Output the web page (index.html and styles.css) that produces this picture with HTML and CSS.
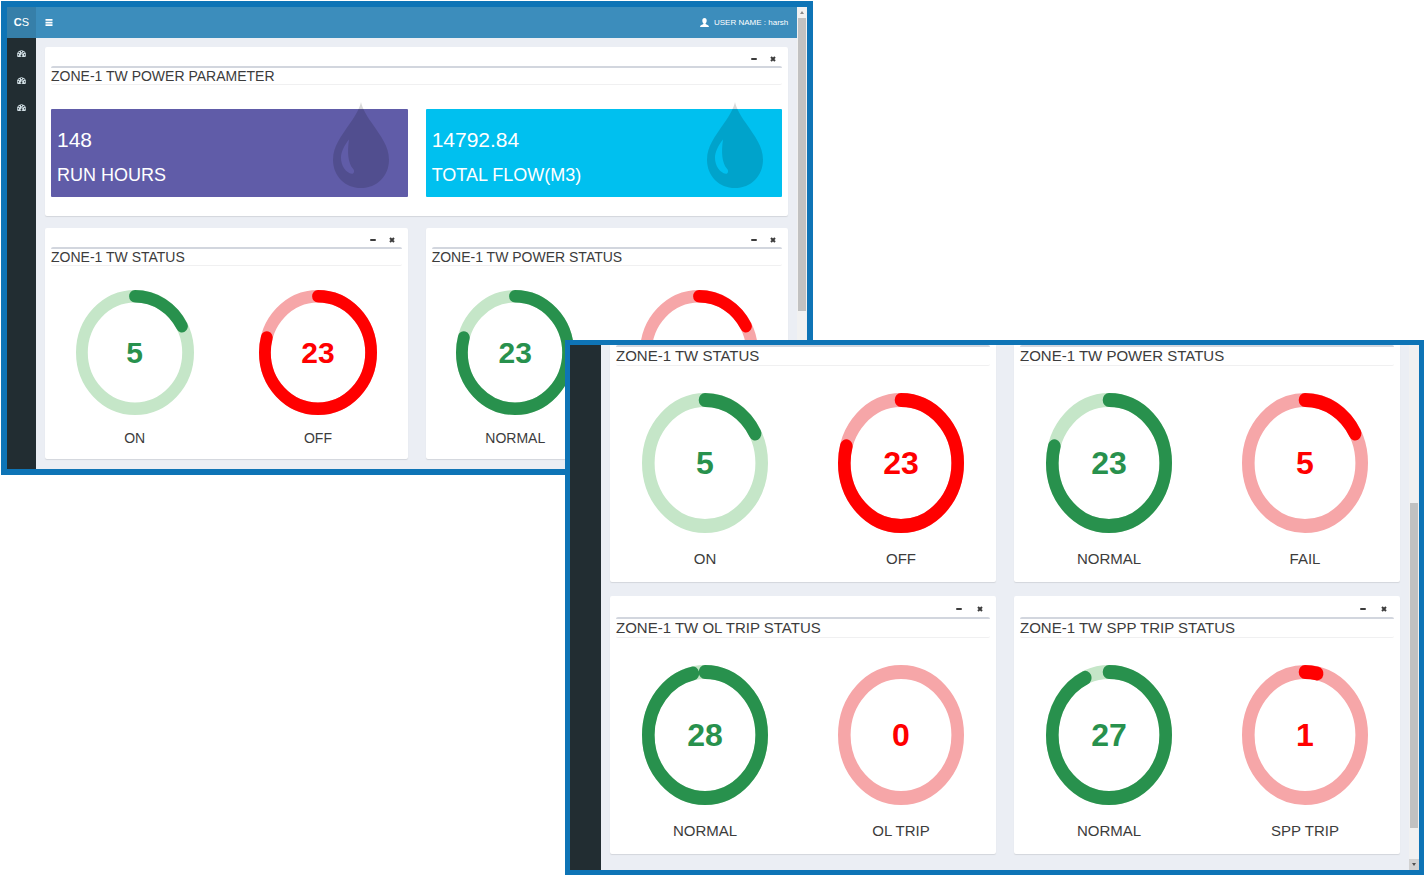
FILE: index.html
```
<!DOCTYPE html>
<html lang="en">
<head>
<meta charset="utf-8">
<title>Zone-1 TW dashboard</title>
<link rel="stylesheet" href="styles.css">
</head>
<body>
<svg class="symbols" aria-hidden="true">
  <symbol id="gauge" viewBox="0 0 1792 1600"><path d="M384 1152q0-53-37.5-90.5t-90.5-37.5-90.5 37.5-37.5 90.5 37.5 90.5 90.5 37.5 90.5-37.5 37.5-90.5zm192-448q0-53-37.5-90.5t-90.5-37.5-90.5 37.5-37.5 90.5 37.5 90.5 90.5 37.5 90.5-37.5 37.5-90.5zm428 481l101-382q6-26-7.5-48.5t-38.5-29.5-48 6.5-30 39.5l-101 382q-60 5-107 43.5t-63 98.5q-20 77 20 146t117 89 146-20 89-117q16-60-6-117t-72-91zm660-33q0-53-37.5-90.5t-90.5-37.5-90.5 37.5-37.5 90.5 37.5 90.5 90.5 37.5 90.5-37.5 37.5-90.5zm-640-640q0-53-37.5-90.5t-90.5-37.5-90.5 37.5-37.5 90.5 37.5 90.5 90.5 37.5 90.5-37.5 37.5-90.5zm448 192q0-53-37.5-90.5t-90.5-37.5-90.5 37.5-37.5 90.5 37.5 90.5 90.5 37.5 90.5-37.5 37.5-90.5zm320 448q0 261-141 483-19 29-54 29h-1402q-35 0-54-29-141-221-141-483 0-182 71-348t191-286 286-191 348-71 348 71 286 191 191 286 71 348z"/></symbol>
  <symbol id="drop" viewBox="0 0 56 85" preserveAspectRatio="none"><path fill-rule="evenodd" d="M28 0C29 5 33 13 39 21C48 34 56 44 56 57C56 73 44 85 28 85C12 85 0 73 0 57C0 44 8 34 17 21C23 13 27 5 28 0ZM16 37C11 43 8 50 8 55C8 63 13 70 19 71C21 71 22 68 20 66C15 60 14 50 16 37Z"/></symbol>
  <symbol id="minus" viewBox="0 0 6 6"><rect y="2" width="6" height="2" rx="1"/></symbol>
  <symbol id="cross" viewBox="0 0 6 6"><path d="M1 1L5 5M5 1L1 5" fill="none" stroke="currentColor" stroke-width="2"/></symbol>
</svg>

<main class="desktop">
  <section class="window window-main" aria-label="Dashboard, top">
    <header class="topbar">
      <a class="brand" href="#"><b>C</b>S</a>
      <button class="menu" aria-label="Toggle navigation"><svg viewBox="0 0 8 8"><path d="M0 1H8M0 4H8M0 7H8" stroke="currentColor" stroke-width="2" fill="none"/></svg></button>
      <a class="user" href="#"><svg viewBox="0 0 9 9"><path d="M4.500 0C6 0 6.700 1 6.700 2.400C6.700 3.800 6.200 4.800 5.600 5.300V6C6.500 6.600 9 7 9 9H0C0 7 2.500 6.600 3.400 6V5.300C2.800 4.800 2.300 3.800 2.300 2.400C2.300 1 3 0 4.500 0Z"/></svg>USER NAME : harsh</a>
    </header>
    <nav class="sidebar" aria-label="Main">
      <a href="#" aria-label="Dashboard 1"><svg><use href="#gauge"/></svg></a>
      <a href="#" aria-label="Dashboard 2"><svg><use href="#gauge"/></svg></a>
      <a href="#" aria-label="Dashboard 3"><svg><use href="#gauge"/></svg></a>
    </nav>
    <div class="content">
      <article class="card wide">
        <div class="tools"><button aria-label="Collapse"><svg><use href="#minus"/></svg></button><button aria-label="Close"><svg><use href="#cross"/></svg></button></div>
        <h2>ZONE-1 TW POWER PARAMETER</h2>
        <div class="tiles">
          <div class="tile purple"><p class="figure">148</p><p class="caption">RUN HOURS</p><svg><use href="#drop"/></svg></div>
          <div class="tile cyan"><p class="figure">14792.84</p><p class="caption">TOTAL FLOW(M3)</p><svg><use href="#drop"/></svg></div>
        </div>
      </article>
      <article class="card">
        <div class="tools"><button aria-label="Collapse"><svg><use href="#minus"/></svg></button><button aria-label="Close"><svg><use href="#cross"/></svg></button></div>
        <h2>ZONE-1 TW STATUS</h2>
        <div class="gauges">
          <figure class="gauge green"><svg viewBox="0 0 100 100" preserveAspectRatio="none"><circle class="track" cx="50" cy="50" r="45"/><circle class="value" cx="50" cy="50" r="45" pathLength="29" stroke-dasharray="5 29"/></svg><b>5</b><figcaption>ON</figcaption></figure>
          <figure class="gauge red"><svg viewBox="0 0 100 100" preserveAspectRatio="none"><circle class="track" cx="50" cy="50" r="45"/><circle class="value" cx="50" cy="50" r="45" pathLength="29" stroke-dasharray="23 29"/></svg><b>23</b><figcaption>OFF</figcaption></figure>
        </div>
      </article>
      <article class="card">
        <div class="tools"><button aria-label="Collapse"><svg><use href="#minus"/></svg></button><button aria-label="Close"><svg><use href="#cross"/></svg></button></div>
        <h2>ZONE-1 TW POWER STATUS</h2>
        <div class="gauges">
          <figure class="gauge green"><svg viewBox="0 0 100 100" preserveAspectRatio="none"><circle class="track" cx="50" cy="50" r="45"/><circle class="value" cx="50" cy="50" r="45" pathLength="29" stroke-dasharray="23 29"/></svg><b>23</b><figcaption>NORMAL</figcaption></figure>
          <figure class="gauge red"><svg viewBox="0 0 100 100" preserveAspectRatio="none"><circle class="track" cx="50" cy="50" r="45"/><circle class="value" cx="50" cy="50" r="45" pathLength="29" stroke-dasharray="5 29"/></svg></figure>
        </div>
      </article>
    </div>
    <div class="scrollbar"><i class="arrow up"></i><i class="thumb"></i><i class="rest"></i></div>
  </section>

  <section class="window window-front" aria-label="Dashboard, bottom">
    <nav class="sidebar" aria-label="Secondary"></nav>
    <div class="content">
      <article class="card scrolled">
        <h2>ZONE-1 TW STATUS</h2>
        <div class="gauges">
          <figure class="gauge green"><svg viewBox="0 0 100 100" preserveAspectRatio="none"><circle class="track" cx="50" cy="50" r="45"/><circle class="value" cx="50" cy="50" r="45" pathLength="29" stroke-dasharray="5 29"/></svg><b>5</b><figcaption>ON</figcaption></figure>
          <figure class="gauge red"><svg viewBox="0 0 100 100" preserveAspectRatio="none"><circle class="track" cx="50" cy="50" r="45"/><circle class="value" cx="50" cy="50" r="45" pathLength="29" stroke-dasharray="23 29"/></svg><b>23</b><figcaption>OFF</figcaption></figure>
        </div>
      </article>
      <article class="card scrolled">
        <h2>ZONE-1 TW POWER STATUS</h2>
        <div class="gauges">
          <figure class="gauge green"><svg viewBox="0 0 100 100" preserveAspectRatio="none"><circle class="track" cx="50" cy="50" r="45"/><circle class="value" cx="50" cy="50" r="45" pathLength="29" stroke-dasharray="23 29"/></svg><b>23</b><figcaption>NORMAL</figcaption></figure>
          <figure class="gauge red"><svg viewBox="0 0 100 100" preserveAspectRatio="none"><circle class="track" cx="50" cy="50" r="45"/><circle class="value" cx="50" cy="50" r="45" pathLength="29" stroke-dasharray="5 29"/></svg><b>5</b><figcaption>FAIL</figcaption></figure>
        </div>
      </article>
      <article class="card">
        <div class="tools"><button aria-label="Collapse"><svg><use href="#minus"/></svg></button><button aria-label="Close"><svg><use href="#cross"/></svg></button></div>
        <h2>ZONE-1 TW OL TRIP STATUS</h2>
        <div class="gauges">
          <figure class="gauge green"><svg viewBox="0 0 100 100" preserveAspectRatio="none"><circle class="track" cx="50" cy="50" r="45"/><circle class="value" cx="50" cy="50" r="45" pathLength="29" stroke-dasharray="28 29"/></svg><b>28</b><figcaption>NORMAL</figcaption></figure>
          <figure class="gauge red"><svg viewBox="0 0 100 100" preserveAspectRatio="none"><circle class="track" cx="50" cy="50" r="45"/></svg><b>0</b><figcaption>OL TRIP</figcaption></figure>
        </div>
      </article>
      <article class="card">
        <div class="tools"><button aria-label="Collapse"><svg><use href="#minus"/></svg></button><button aria-label="Close"><svg><use href="#cross"/></svg></button></div>
        <h2>ZONE-1 TW SPP TRIP STATUS</h2>
        <div class="gauges">
          <figure class="gauge green"><svg viewBox="0 0 100 100" preserveAspectRatio="none"><circle class="track" cx="50" cy="50" r="45"/><circle class="value" cx="50" cy="50" r="45" pathLength="29" stroke-dasharray="27 29"/></svg><b>27</b><figcaption>NORMAL</figcaption></figure>
          <figure class="gauge red"><svg viewBox="0 0 100 100" preserveAspectRatio="none"><circle class="track" cx="50" cy="50" r="45"/><circle class="value" cx="50" cy="50" r="45" pathLength="29" stroke-dasharray="1 29"/></svg><b>1</b><figcaption>SPP TRIP</figcaption></figure>
        </div>
      </article>
    </div>
    <div class="scrollbar"><i class="rest"></i><i class="thumb"></i><i class="gap"></i><i class="arrow down"></i></div>
  </section>
</main>
</body>
</html>
```
FILE: styles.css
```
* { box-sizing: border-box; }
body {
  margin: 0;
  background: #fff;
  color: #3c3c3c;
  font-family: "Liberation Sans", Arial, sans-serif;
}
h2, p, figure { margin: 0; }
a { color: inherit; text-decoration: none; }
svg { display: block; fill: currentColor; }
button {
  display: grid;
  place-items: center;
  border: 0;
  padding: 0;
  background: none;
  color: inherit;
  cursor: pointer;
}
.symbols { position: absolute; width: 0; height: 0; }
.desktop { position: relative; min-height: 100vh; }

/* Windows */
.window {
  position: absolute;
  display: grid;
  background: #ebeef4;
}
.window-main {
  --text: 14px;
  --line: 16px;
  --number: 30px;
  --ring-width: 118px;
  --ring-height: 125px;
  --ring-top: 24px;
  --label-top: 15px;
  --card-end: 13px;
  --bleed: -8px;
  --tool: 19px;
  top: 1px;
  left: 1px;
  width: 57%;
  border: 6px solid #0e74b6;
  grid-template-columns: 29px 1fr 10px;
  grid-template-rows: 31px auto;
}
.window-front {
  --text: 15px;
  --line: 18px;
  --number: 32px;
  --ring-width: 126px;
  --ring-height: 140px;
  --ring-top: 27px;
  --label-top: 17px;
  --card-end: 14px;
  --bleed: -9px;
  --tool: 21px;
  top: 340px;
  right: 1px;
  width: calc(60% + 4px);
  border: 5px solid #0e74b6;
  grid-template-columns: 31px 1fr 10px;
}

/* Top bar */
.topbar {
  grid-column: 1 / 3;
  display: flex;
  align-items: center;
  background: #3c8dbc;
  color: #fff;
}
.brand {
  width: 29px;
  line-height: 31px;
  background: #367fa9;
  font-size: 11px;
  text-align: center;
}
.menu { width: 25px; height: 31px; }
.menu svg { width: 8px; height: 7px; }
.user {
  display: flex;
  align-items: center;
  gap: 5px;
  margin-left: auto;
  padding-right: 9px;
  font-size: 8px;
}
.user svg { width: 9px; height: 9px; }

/* Sidebar */
.sidebar {
  grid-column: 1;
  padding-top: 1px;
  background: #222d32;
  color: #d3e0e6;
}
.sidebar a { display: grid; place-items: center; height: 27px; }
.sidebar svg { width: 9px; height: 8px; }

/* Cards */
.content {
  display: grid;
  grid-template-columns: 1fr 1fr;
  gap: 12px 18px;
  padding: 9px 9px 10px;
}
.window-front .content { row-gap: 14px; padding: 0 9px 16px; }
.card {
  padding: 0 6px var(--card-end);
  border-radius: 2px;
  background: #fff;
  box-shadow: 0 1px 1px rgba(0, 0, 0, .1);
}
.card.scrolled { border-radius: 0 0 2px 2px; }
.card.wide { grid-column: 1 / 3; padding-bottom: 19px; }
.tools { display: flex; justify-content: flex-end; height: var(--tool); padding-top: 4px; }
.tools button { width: var(--tool); }
.tools svg { width: 6px; height: 6px; }
.card h2 {
  border-top: 2px solid #d2d6de;
  border-bottom: 1px solid #f0f0f1;
  border-radius: 2px;
  font-size: var(--text);
  line-height: var(--line);
  font-weight: 400;
}

/* Summary tiles */
.tiles { display: grid; grid-template-columns: 1fr 1fr; gap: 18px; margin-top: 24px; }
.tile {
  position: relative;
  padding: 18px 6px 10px;
  border-radius: 1px;
  color: #fff;
}
.purple { background: #605ca8; }
.cyan { background: #00c0ef; }
.figure { font-size: 21px; line-height: 26px; }
.caption { margin-top: 10px; font-size: 18px; line-height: 24px; }
.tile svg {
  position: absolute;
  top: -7px;
  right: 19px;
  width: 56px;
  height: 86px;
  color: rgba(0, 0, 0, .15);
}

/* Ring gauges */
.gauges {
  display: grid;
  grid-template-columns: 1fr 1fr;
  margin: var(--ring-top) var(--bleed) 0;
}
.gauge {
  display: grid;
  align-content: start;
  justify-items: center;
  align-items: center;
}
.gauge svg {
  grid-area: 1 / 1;
  width: var(--ring-width);
  height: var(--ring-height);
}
.gauge circle { fill: none; stroke-width: 10; }
.gauge .value { stroke-linecap: round; transform: rotate(-90deg); transform-origin: 50px 50px; }
.gauge b { grid-area: 1 / 1; font-size: var(--number); }
.gauge figcaption {
  margin-top: var(--label-top);
  font-size: var(--text);
  line-height: var(--line);
}
.green b { color: #28914d; }
.green .track { stroke: #c5e6c8; }
.green .value { stroke: #28914d; }
.red b { color: #f00; }
.red .track { stroke: #f6a6a8; }
.red .value { stroke: #f00; }

/* Scrollbars */
.scrollbar {
  grid-column: 3;
  display: flex;
  flex-direction: column;
  align-items: center;
  background: #f1f1f1;
}
.window-main .scrollbar { grid-row: 1 / 3; grid-column: 3; }
.thumb { flex: 63; width: 8px; background: #c1c1c1; }
.rest { flex: 34; }
.gap { flex: 6; }
.window-front .thumb { flex: 64; }
.window-front .rest { flex: 31; }
.arrow { display: grid; place-items: center; width: 10px; height: 11px; }
.arrow::before { content: ""; border: 2px solid transparent; }
.up::before { border-top: 0; border-bottom: 3px solid #8a8a8a; }
.down { background: #d2d2d2; }
.down::before { border-bottom: 0; border-top: 3px solid #505050; }
```
